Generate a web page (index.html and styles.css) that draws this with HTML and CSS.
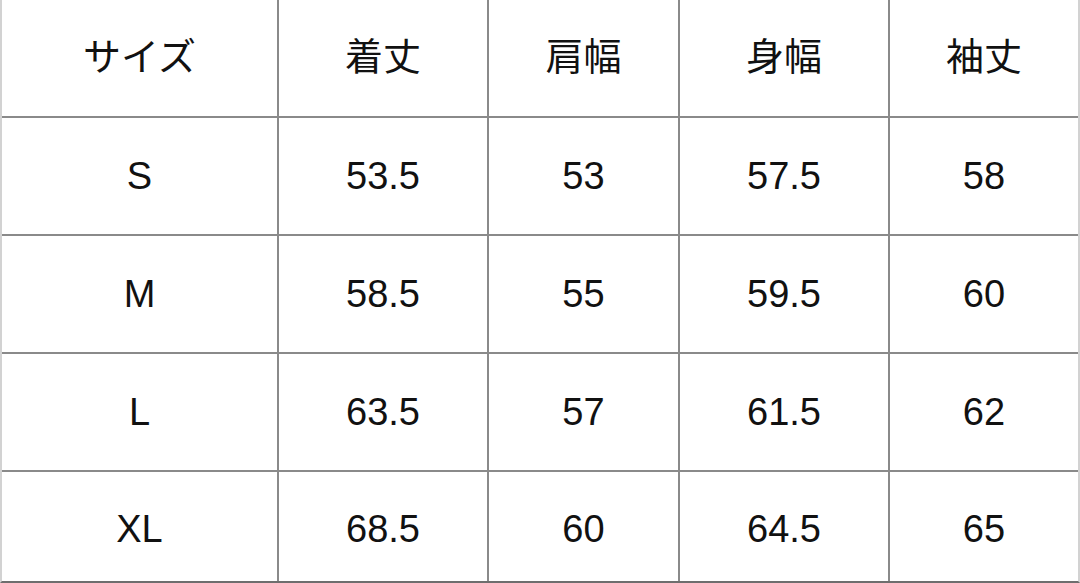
FILE: index.html
```html
<!DOCTYPE html>
<html lang="ja">
<head>
<meta charset="utf-8">
<link rel="stylesheet" href="styles.css">
</head>
<body>
<div class="size-table">
  <div class="cell head">サイズ</div><div class="cell head">着丈</div><div class="cell head">肩幅</div><div class="cell head">身幅</div><div class="cell head">袖丈</div>
  <div class="cell">S</div><div class="cell">53.5</div><div class="cell">53</div><div class="cell">57.5</div><div class="cell">58</div>
  <div class="cell">M</div><div class="cell">58.5</div><div class="cell">55</div><div class="cell">59.5</div><div class="cell">60</div>
  <div class="cell">L</div><div class="cell">63.5</div><div class="cell">57</div><div class="cell">61.5</div><div class="cell">62</div>
  <div class="cell last">XL</div><div class="cell last">68.5</div><div class="cell last">60</div><div class="cell last">64.5</div><div class="cell last">65</div>
</div>
</body>
</html>
```

FILE: styles.css
```css
html, body {
  margin: 0;
  padding: 0;
  background: #ffffff;
}

.size-table {
  width: 1080px;
  height: 583px;
  box-sizing: border-box;
  display: grid;
  grid-template-columns: 275px 208px 189px 208px 188px;
  grid-template-rows: 116px 116px 116px 116px 109px;
  gap: 2px;
  background: #8a8a8a;
  border-left: 2px solid #d2d2d2;
  border-right: 2px solid #d2d2d2;
  border-bottom: 2px solid #6e6e6e;
  font-family: "Liberation Sans", "Noto Sans CJK JP", Arial, sans-serif;
  font-size: 38px;
  color: #111111;
}

.cell {
  background: #ffffff;
  display: flex;
  align-items: center;
  justify-content: center;
}

.cell.head {
  padding-bottom: 10px;
}

.cell.last {
  padding-top: 6px;
}
```
